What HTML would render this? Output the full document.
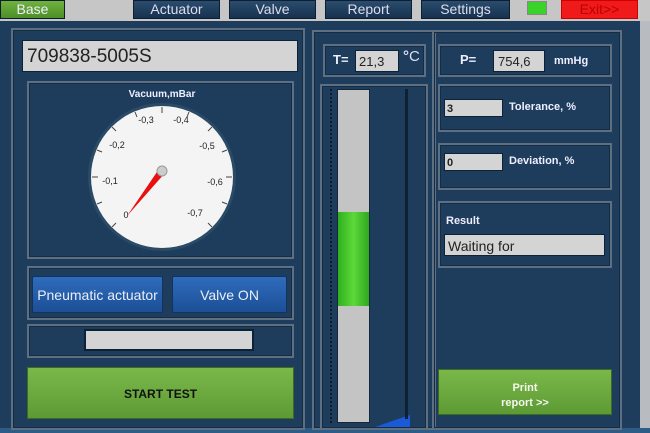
<html><head><style>
body{margin:0;width:650px;height:433px;overflow:hidden;background:#1e3d5c;font-family:"Liberation Sans",sans-serif;position:relative}
div{position:absolute;box-sizing:border-box}
.tab{top:0;height:19px;background:linear-gradient(#2a4c6e,#17324f);color:#dde;font-size:14px;text-align:center;line-height:17px;border:1px solid #0c1e30}
.box{border:2px solid #5d6f80;box-shadow:inset 0 0 0 1px #142c44}
.fld{background:#d4d4d4;border:1px solid #0e2236;color:#222}
.lbl{color:#eef;font-weight:bold;font-size:11px}
.btn{background:linear-gradient(#2f6cbc,#1c4f96);color:#e8eef8;font-size:14px;text-align:center;border:1px solid #12335e;border-radius:2px}
.grn{background:linear-gradient(#7ab84a,#5e9a34);border:1px solid #3c6b22;text-align:center;font-weight:bold;font-size:11px}
</style></head><body>
<div style="left:0;top:0;width:650px;height:21px;background:#c6c6c6"></div>
<div class="tab" style="left:0;width:65px;background:linear-gradient(#6fb23e,#4e8f27);color:#eef">Base</div>
<div class="tab" style="left:133px;width:87px">Actuator</div>
<div class="tab" style="left:229px;width:87px">Valve</div>
<div class="tab" style="left:325px;width:87px">Report</div>
<div class="tab" style="left:421px;width:89px">Settings</div>
<div style="left:527px;top:1px;width:20px;height:14px;background:#3ad32a;border:1px solid #888"></div>
<div class="tab" style="left:561px;width:77px;background:#f01a1a;color:#b00;border-color:#c00">Exit&gt;&gt;</div>
<div style="left:640px;top:21px;width:10px;height:412px;background:#b8bcc0"></div>
<div style="left:0;top:428px;width:650px;height:5px;background:#2d5d86"></div>
<div class="box" style="left:11px;top:28px;width:294px;height:402px"></div>
<div class="fld" style="left:22px;top:40px;width:276px;height:32px;font-size:19px;line-height:32px;padding-left:4px">709838-5005S</div>
<div class="box" style="left:27px;top:81px;width:267px;height:178px"></div>
<svg style="position:absolute;left:0;top:0" width="650" height="433">
<text x="162" y="97" fill="#eef" font-size="10" font-weight="bold" text-anchor="middle" font-family="Liberation Sans">Vacuum,mBar</text>
<g transform="translate(0,-5)">
<circle cx="162" cy="182" r="74" fill="#2a4a66"/>
<circle cx="162" cy="182" r="71" fill="#f4f4f4"/>
<g font-size="9" fill="#222" text-anchor="middle" font-family="Liberation Sans">
<text x="146" y="128">-0,3</text><text x="181" y="128">-0,4</text>
<text x="117" y="153">-0,2</text><text x="207" y="154">-0,5</text>
<text x="110" y="189">-0,1</text><text x="215" y="190">-0,6</text>
<text x="126" y="223">0</text><text x="195" y="221">-0,7</text>
</g>
<g stroke="#444" stroke-width="1">
<line x1="112" y1="232" x2="116" y2="228"/><line x1="212" y1="232" x2="208" y2="228"/>
<line x1="92" y1="182" x2="98" y2="182"/><line x1="232" y1="182" x2="226" y2="182"/>
<line x1="112" y1="132" x2="116" y2="136"/><line x1="212" y1="132" x2="208" y2="136"/>
<line x1="162" y1="112" x2="162" y2="118"/><line x1="135" y1="117" x2="137" y2="122"/><line x1="189" y1="117" x2="187" y2="122"/>
<line x1="97" y1="155" x2="102" y2="157"/><line x1="227" y1="155" x2="222" y2="157"/>
<line x1="97" y1="209" x2="102" y2="207"/><line x1="227" y1="209" x2="222" y2="207"/>
</g>
<polygon points="159,174 165,178 127,221" fill="#e81010"/>
<circle cx="162" cy="176" r="5" fill="#ccc" stroke="#999"/>
</g>
<polygon points="372,428 410,415 410,428" fill="#1a5ad8"/>
</svg>
<div class="box" style="left:27px;top:266px;width:267px;height:54px"></div>
<div class="btn" style="left:32px;top:276px;width:131px;height:37px;line-height:37px">Pneumatic actuator</div>
<div class="btn" style="left:172px;top:276px;width:115px;height:37px;line-height:37px">Valve ON</div>
<div class="box" style="left:27px;top:324px;width:267px;height:34px"></div>
<div class="fld" style="left:84px;top:329px;width:170px;height:22px;border-width:2px"></div>
<div class="grn" style="left:27px;top:367px;width:267px;height:52px;line-height:52px;color:#111;font-size:12px">START TEST</div>
<div class="box" style="left:312px;top:30px;width:124px;height:400px"></div>
<div class="box" style="left:323px;top:44px;width:103px;height:33px"></div>
<div class="lbl" style="left:333px;top:52px;font-size:13px">T=</div>
<div class="fld" style="left:355px;top:50px;width:44px;height:22px;font-size:13px;line-height:22px;padding-left:3px">21,3</div>
<div style="left:403px;top:48px;color:#dde;font-size:15px"><b>°</b>C</div>
<div class="box" style="left:320px;top:84px;width:108px;height:346px"></div>
<div style="left:330px;top:89px;width:2px;height:334px;border-left:2px dotted #0b1a2a"></div>
<div style="left:337px;top:89px;width:33px;height:334px;background:#c4c4c4;border:1px solid #15293d"></div>
<div style="left:338px;top:212px;width:31px;height:94px;background:linear-gradient(90deg,#2eb01e,#5ed83a,#2ea81e)"></div>
<div style="left:405px;top:89px;width:3px;height:330px;background:#0e2034"></div>
<div class="box" style="left:432px;top:30px;width:190px;height:400px"></div>
<div class="box" style="left:438px;top:44px;width:174px;height:33px"></div>
<div class="lbl" style="left:460px;top:52px;font-size:13px">P=</div>
<div class="fld" style="left:493px;top:50px;width:52px;height:22px;font-size:13px;line-height:22px;padding-left:4px">754,6</div>
<div class="lbl" style="left:554px;top:55px">mmHg</div>
<div class="box" style="left:438px;top:84px;width:174px;height:48px"></div>
<div class="fld" style="left:444px;top:99px;width:59px;height:18px;font-size:11px;font-weight:bold;line-height:18px;padding-left:2px">3</div>
<div class="lbl" style="left:509px;top:101px">Tolerance, %</div>
<div class="box" style="left:438px;top:143px;width:174px;height:47px"></div>
<div class="fld" style="left:444px;top:153px;width:59px;height:18px;font-size:11px;font-weight:bold;line-height:18px;padding-left:2px">0</div>
<div class="lbl" style="left:509px;top:155px">Deviation, %</div>
<div class="box" style="left:438px;top:201px;width:174px;height:67px"></div>
<div class="lbl" style="left:446px;top:215px">Result</div>
<div class="fld" style="left:444px;top:234px;width:161px;height:22px;font-size:14px;line-height:22px;padding-left:3px">Waiting for</div>
<div class="grn" style="left:438px;top:369px;width:174px;height:46px;color:#f4f8f0;padding-top:11px;line-height:15px">Print<br>report &gt;&gt;</div>
</body></html>
